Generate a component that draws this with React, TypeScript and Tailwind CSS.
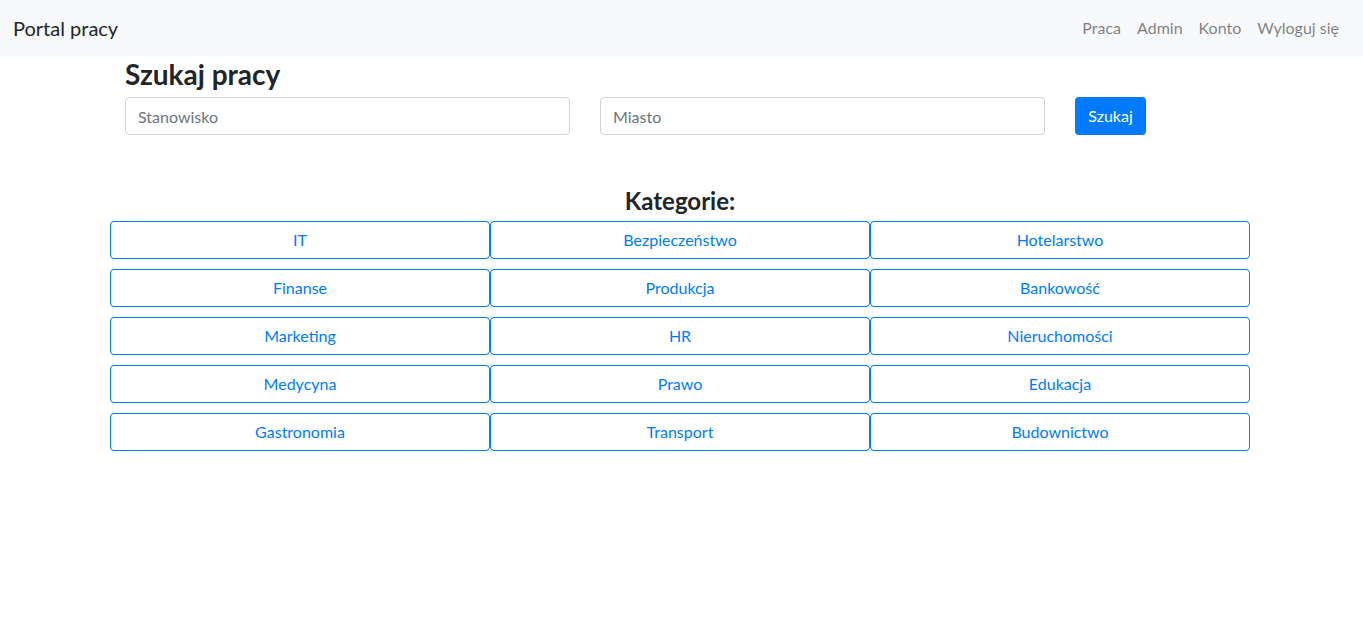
const categories = [
  "IT",
  "Bezpieczeństwo",
  "Hotelarstwo",
  "Finanse",
  "Produkcja",
  "Bankowość",
  "Marketing",
  "HR",
  "Nieruchomości",
  "Medycyna",
  "Prawo",
  "Edukacja",
  "Gastronomia",
  "Transport",
  "Budownictwo",
];

const navLinks = ["Praca", "Admin", "Konto", "Wyloguj się"];

export default function App() {
  return (
    <div className="min-h-screen bg-white text-[#212529] font-['Lato',sans-serif]">
      <nav className="flex h-14 items-center justify-between bg-[#f8f9fa] pl-[13px] pr-4">
        <a className="text-[20px] leading-none text-[#212529]">Portal pracy</a>
        <ul className="flex">
          {navLinks.map((l) => (
            <li key={l} className="px-2 text-[16px] text-[rgba(0,0,0,0.5)]">
              {l}
            </li>
          ))}
        </ul>
      </nav>

      <div className="ml-[110px] w-[1140px]">
        <div className="px-[15px]">
          <h2 className="text-[28px] font-bold leading-[36px]">Szukaj pracy</h2>
          <form className="mt-[5px] flex items-center gap-[30px]">
            <input
              placeholder="Stanowisko"
              className="h-[38px] w-[445px] rounded border border-[#ced4da] px-3 text-[16px] text-[#495057] placeholder:text-[#6c757d]"
            />
            <input
              placeholder="Miasto"
              className="h-[38px] w-[445px] rounded border border-[#ced4da] px-3 text-[16px] text-[#495057] placeholder:text-[#6c757d]"
            />
            <button
              type="button"
              className="h-[38px] w-[71px] rounded bg-[#007bff] text-[16px] text-white"
            >
              Szukaj
            </button>
          </form>
        </div>

        <h3 className="mt-[50px] text-center text-[24px] font-bold leading-[32px]">Kategorie:</h3>
        <div className="mt-[4px] grid grid-cols-3 gap-y-[10px]">
          {categories.map((c) => (
            <button
              key={c}
              type="button"
              className="h-[38px] rounded border border-[#007bff] bg-white text-[16px] text-[#007bff]"
            >
              {c}
            </button>
          ))}
        </div>
      </div>
    </div>
  );
}
